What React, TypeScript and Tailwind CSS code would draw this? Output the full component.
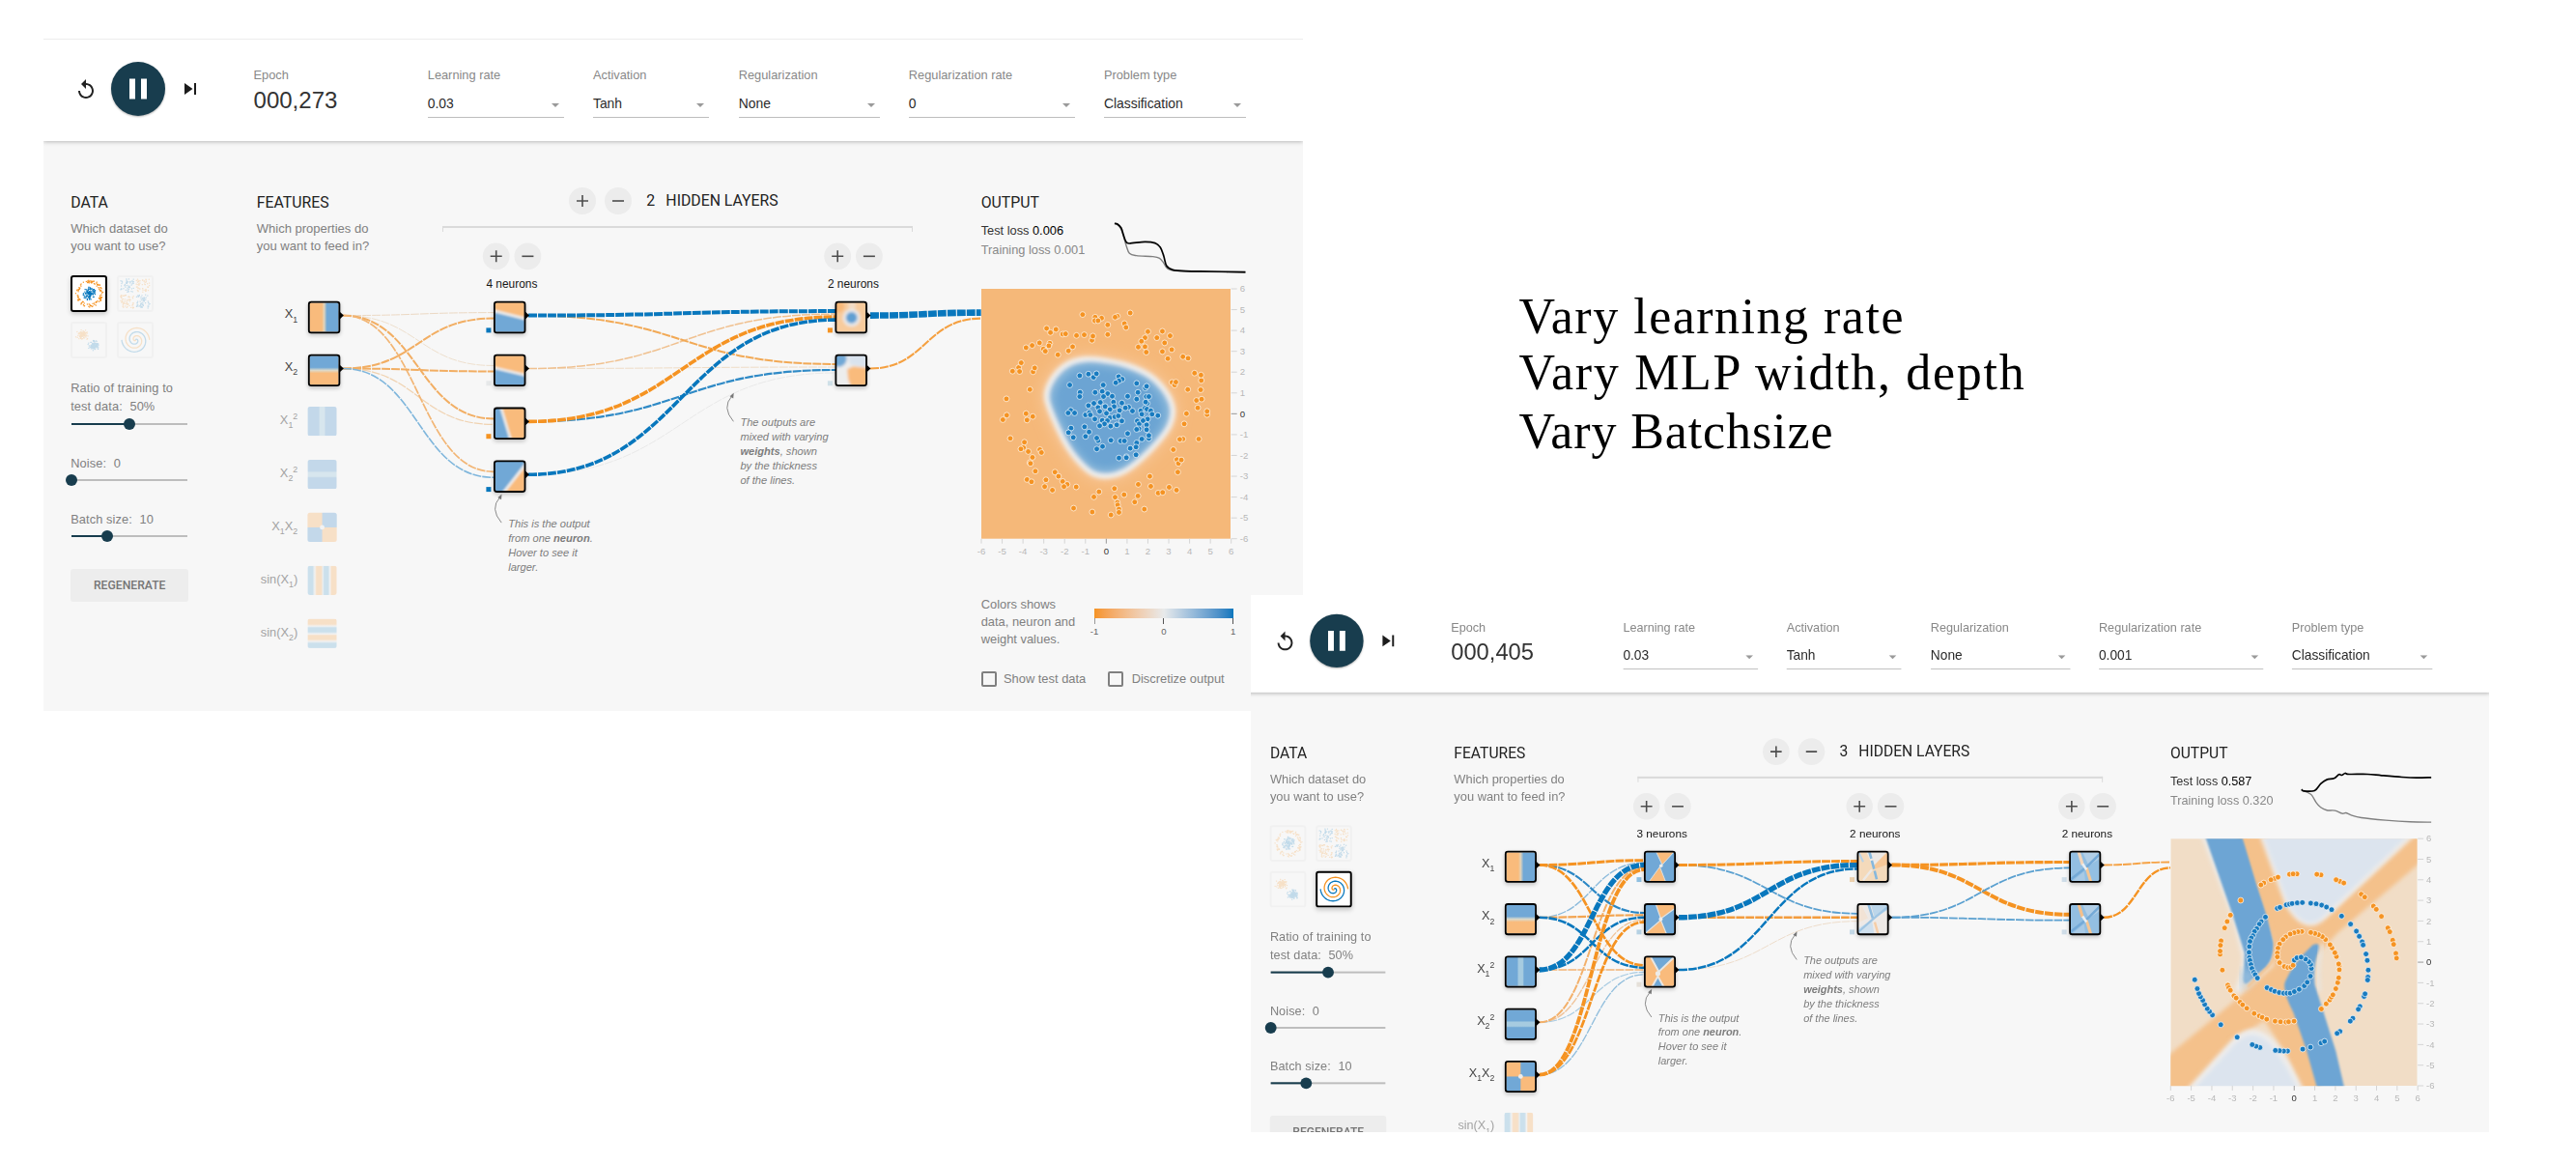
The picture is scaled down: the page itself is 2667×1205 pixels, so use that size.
import React from "react";

type Pt = [number, number];

const ORANGE = "#f59322";
const BLUE = "#0877bd";
const O = "#f9bb7c";
const B = "#71a8d6";
const W = "#ececea";

/* ---------- helpers ---------- */

function rng(seed: number) {
  let a = seed;
  return () => {
    a = (a + 0x6d2b79f5) | 0;
    let t = Math.imul(a ^ (a >>> 15), 1 | a);
    t = (t + Math.imul(t ^ (t >>> 7), 61 | t)) ^ t;
    return ((t ^ (t >>> 14)) >>> 0) / 4294967296;
  };
}

function pairs(s: string): Pt[] {
  return s
    .trim()
    .split(/\s+/)
    .map((p) => p.split(",").map(Number) as Pt);
}

function smooth(pts: Pt[], closed: boolean) {
  const n = pts.length;
  const at = (i: number) => (closed ? pts[(i + n) % n] : pts[Math.max(0, Math.min(n - 1, i))]);
  let d = `M${pts[0][0]},${pts[0][1]}`;
  for (let i = 0; i < (closed ? n : n - 1); i++) {
    const [a, b, c, e] = [at(i - 1), at(i), at(i + 1), at(i + 2)];
    d += `C${b[0] + (c[0] - a[0]) / 6},${b[1] + (c[1] - a[1]) / 6} ${c[0] - (e[0] - b[0]) / 6},${c[1] - (e[1] - b[1]) / 6} ${c[0]},${c[1]}`;
  }
  return d;
}

/* ---------- dataset thumbnails ---------- */

type Kind = "circle" | "xor" | "gauss" | "spiral";

function thumbDots(kind: Kind) {
  const r = rng(kind.length * 977 + 13);
  const g = () => r() + r() + r() + r() - 2;
  const out: { x: number; y: number; c: string }[] = [];
  if (kind === "circle") {
    for (let i = 0; i < 120; i++) {
      const a = r() * Math.PI * 2;
      const m = r() * 7;
      out.push({ x: 19.6 + m * Math.cos(a), y: 18.9 + m * Math.sin(a), c: BLUE });
    }
    for (let i = 0; i < 120; i++) {
      const a = r() * Math.PI * 2;
      const m = 10.8 + r() * 3.4;
      out.push({ x: 19.6 + m * Math.cos(a), y: 18.9 + m * Math.sin(a), c: ORANGE });
    }
  } else if (kind === "xor") {
    for (let i = 0; i < 230; i++) {
      const x = (r() < 0.5 ? -1 : 1) * (1.2 + r() * 14);
      const y = (r() < 0.5 ? -1 : 1) * (1.2 + r() * 14);
      out.push({ x: 18.9 + x, y: 18.9 + y, c: x * y > 0 ? BLUE : ORANGE });
    }
  } else if (kind === "gauss") {
    for (let i = 0; i < 110; i++) {
      out.push({ x: 12.8 + g() * 4, y: 14 + g() * 3.8, c: ORANGE });
      out.push({ x: 24.6 + g() * 4, y: 25 + g() * 3.8, c: BLUE });
    }
  }
  return out;
}

function spiralPath(delta: number) {
  const p: string[] = [];
  for (let i = 0; i <= 90; i++) {
    const m = (i / 90) * 14.4;
    const t = 1.75 * (i / 90) * 2 * Math.PI + delta;
    p.push(`${(19.4 + m * Math.sin(t)).toFixed(2)},${(18.9 - m * Math.cos(t)).toFixed(2)}`);
  }
  return p.join(" ");
}

function Thumb({ kind, active }: { kind: Kind; active: boolean }) {
  return (
    <div
      className={
        active
          ? "h-[37.5px] w-[37.5px] overflow-hidden rounded-[3px] bg-white shadow-[0_2px_5px_rgba(0,0,0,0.2)] outline-2 -outline-offset-2 outline-black"
          : "h-[37.5px] w-[37.5px] overflow-hidden rounded-[3px] outline-2 -outline-offset-2 outline-[#f1f1f1]"
      }
    >
      <svg width="37.5" height="37.5" viewBox="0 0 37.5 37.5" opacity={active ? 1 : 0.22}>
        {kind === "spiral" ? (
          <>
            <polyline points={spiralPath(0)} fill="none" stroke={BLUE} strokeWidth="1.3" />
            <polyline points={spiralPath(Math.PI)} fill="none" stroke={ORANGE} strokeWidth="1.3" />
          </>
        ) : (
          thumbDots(kind).map((d, i) => <rect key={i} x={d.x - 0.6} y={d.y - 0.6} width="1.2" height="1.2" fill={d.c} />)
        )}
      </svg>
    </div>
  );
}

/* ---------- header ---------- */

function Select({ label, value, box }: { label: string; value: string; box: string }) {
  return (
    <div className={box}>
      <div className="h-4 text-[12.8px] leading-4 text-[#888]">{label}</div>
      <div className="mt-[11.4px] flex h-[24.6px] justify-between border-b border-[#bdbdbd] pr-[5px] text-[13.9px] leading-5 text-[#2b2b2b]">
        <span>{value}</span>
        <svg className="mt-[10px]" width="8" height="4" viewBox="0 0 8 4">
          <path d="M0 0h8L4 4z" fill="#9a9a9a" />
        </svg>
      </div>
    </div>
  );
}

function Header({ epoch, regRate }: { epoch: string; regRate: string }) {
  return (
    <header className="relative z-10 flex h-[106px] border-t border-[#ececec] bg-white pl-[31.8px] shadow-[0_1px_4px_rgba(0,0,0,0.25)]">
      <svg className="mt-[40.4px]" width="24" height="24" viewBox="0 0 24 24" fill="#222">
        <path d="M12 5V1L7 6l5 5V7c3.31 0 6 2.69 6 6s-2.69 6-6 6-6-2.69-6-6H4c0 4.42 3.58 8 8 8s8-3.58 8-8-3.58-8-8-8z" />
      </svg>
      <div className="mt-[23px] ml-[14.2px] flex h-14 w-14 items-center justify-center rounded-full bg-[#183d4e] shadow-[0_1px_2px_rgba(0,0,0,0.3)]">
        <svg width="36" height="36" viewBox="0 0 24 24" fill="#fff">
          <path d="M6 19h4V5H6v14zm8-14v14h4V5h-4z" />
        </svg>
      </div>
      <svg className="mt-[39.2px] ml-[14px]" width="24" height="24" viewBox="0 0 24 24" fill="#1c1c1c">
        <path d="M6 18l8.5-6L6 6v12zM16 6v12h2V6h-2z" />
      </svg>
      <div className="ml-[53.6px] w-[180.2px] pt-[28.8px]">
        <div className="h-4 text-[12.8px] leading-4 text-[#888]">Epoch</div>
        <div className="mt-1 text-[24px] leading-7 text-[#333]">{epoch}</div>
      </div>
      <Select box="w-[141px] mr-[30.2px] pt-[28.8px]" label="Learning rate" value="0.03" />
      <Select box="w-[120.4px] mr-[30.4px] pt-[28.8px]" label="Activation" value="Tanh" />
      <Select box="w-[146.2px] mr-[29.9px] pt-[28.8px]" label="Regularization" value="None" />
      <Select box="w-[172.6px] mr-[29.5px] pt-[28.8px]" label="Regularization rate" value={regRate} />
      <Select box="w-[146.6px] pt-[28.8px]" label="Problem type" value="Classification" />
    </header>
  );
}

/* ---------- data column ---------- */

function Slider({ at, cls }: { at: number; cls: string }) {
  return (
    <div className={`relative ml-[0.8px] flex h-3 w-[120px] items-center ${cls}`}>
      <div className="h-[2.4px] w-full bg-[#bdbdbd]">
        <div className="h-full bg-[#183d4e]" style={{ width: `${at * 100}%` }} />
      </div>
      <div className="absolute top-0 -ml-1.5 h-3 w-3 rounded-full bg-[#183d4e]" style={{ left: `${at * 100}%` }} />
    </div>
  );
}

function Heading({ children }: { children: React.ReactNode }) {
  return <h4 className="h-5 font-[Roboto] text-[15.8px] leading-5 text-[#222]">{children}</h4>;
}

function DataColumn({ selected }: { selected: Kind }) {
  const kinds: Kind[] = ["circle", "xor", "gauss", "spiral"];
  const label = "text-[12.8px] leading-[19.7px] tracking-[0.1px] text-[#808080]";
  return (
    <div className="ml-[28.2px] w-[192.6px] pt-[53.9px]">
      <Heading>DATA</Heading>
      <p className="mt-[8.6px] text-[13px] leading-[18px] text-[#808080]">
        Which dataset do
        <br />
        you want to use?
      </p>
      <div className="mt-[20.8px] grid w-[85.5px] grid-cols-2 gap-[10.5px]">
        {kinds.map((k) => (
          <Thumb key={k} kind={k} active={k === selected} />
        ))}
      </div>
      <div className={`mt-[20.9px] ${label}`}>
        Ratio of training to
        <br />
        test data:<span className="ml-[7.6px]">50%</span>
      </div>
      <Slider at={0.5} cls="mt-[2.2px]" />
      <div className={`mt-[24.4px] ${label}`}>
        Noise:<span className="ml-[7.6px]">0</span>
      </div>
      <Slider at={0} cls="mt-[1.9px]" />
      <div className={`mt-[24.4px] ${label}`}>
        Batch size:<span className="ml-[7.6px]">10</span>
      </div>
      <Slider at={0.308} cls="mt-[1.9px]" />
      <button className="mt-[27.7px] block h-[34px] w-[122px] rounded-[3px] bg-[#ededed] font-[Roboto] text-[12.2px] font-medium text-[#757575]">
        REGENERATE
      </button>
    </div>
  );
}

/* ---------- node heatmaps, each in a 30 x 30 box ---------- */

function Heat({ kind }: { kind: string }) {
  const poly = (points: string, fill: string) => <polygon points={points} fill={fill} />;
  const bg = (fill: string) => <rect x="-5" y="-5" width="40" height="40" fill={fill} />;
  switch (kind) {
    case "x1":
      return <rect width="30" height="30" fill="url(#gx1)" />;
    case "x2":
      return <rect width="30" height="30" fill="url(#gx2)" />;
    case "x1sq":
      return <rect width="30" height="30" fill="url(#gx1sq)" />;
    case "x2sq":
      return <rect width="30" height="30" fill="url(#gx2sq)" />;
    case "sin1":
      return <rect width="30" height="30" fill="url(#gs1)" />;
    case "sin2":
      return <rect width="30" height="30" fill="url(#gs2)" />;
    case "x1x2":
      return (
        <g filter="url(#b05)">
          {bg(B)}
          <rect x="-5" y="-5" width="20" height="20" fill={O} />
          <rect x="15" y="15" width="20" height="20" fill={O} />
          <circle cx="15" cy="15" r="2.4" fill={W} />
        </g>
      );
    case "a1":
      return (
        <g filter="url(#b1)">
          {bg(O)}
          {poly("-5,7.5 35,17.5 35,40 -5,40", B)}
          <path d="M-5 7.5L35 17.5" stroke={W} strokeWidth="3" />
        </g>
      );
    case "a2":
      return (
        <g filter="url(#b1)">
          {bg(O)}
          {poly("-5,11.5 35,21 35,40 -5,40", B)}
          <path d="M-5 11.5L35 21" stroke={W} strokeWidth="2.6" />
        </g>
      );
    case "a3":
      return (
        <g filter="url(#b1)">
          {bg(O)}
          {poly("-5,-5 5,-5 17,35 -5,35", B)}
          <path d="M5 -5L17 35" stroke={W} strokeWidth="2.6" />
        </g>
      );
    case "a4":
      return (
        <g filter="url(#b1)">
          {bg(B)}
          {poly("35,-2 35,35 6,35", O)}
          <path d="M35 -2L6 35" stroke={W} strokeWidth="2.8" />
        </g>
      );
    case "a5":
      return (
        <g filter="url(#b2)">
          {bg("#f7cb9d")}
          <circle cx="2" cy="4" r="6" fill="#f8b878" />
          <circle cx="16" cy="3" r="4" fill="#f3dcc5" />
          <circle cx="15.5" cy="15.5" r="9" fill="#e8e9ea" />
          <circle cx="15.5" cy="15.5" r="5.8" fill="#5f9fd2" />
        </g>
      );
    case "a6":
      return (
        <g filter="url(#b15)">
          {bg("#ededed")}
          {poly("10,-5 35,-5 35,13 14,9", "#d9e3ee")}
          <circle cx="2" cy="3" r="8.5" fill={B} />
          {poly("11,14 17,11 35,13 35,35 16,35 12,24", O)}
        </g>
      );
    case "b1":
      return (
        <g filter="url(#b05)">
          {bg(B)}
          <g stroke="#d5e0e6" strokeWidth="1">
            {poly("10,-3 32,-3 17.5,13", O)}
            {poly("2,33 22,33 15,15", O)}
          </g>
          <circle cx="16.3" cy="14" r="1.8" fill={W} />
        </g>
      );
    case "b2":
      return (
        <g filter="url(#b05)">
          {bg(B)}
          <g stroke="#dfe3e4" strokeWidth="1.2">
            {poly("10,-3 35,-3 33,2 16,14.5", O)}
            {poly("-4,33 23,33 16,16", O)}
          </g>
          <circle cx="16" cy="15" r="2" fill={W} />
        </g>
      );
    case "b3":
      return (
        <g filter="url(#b05)">
          {bg(O)}
          <g stroke="#e9e6e2" strokeWidth="2">
            {poly("4,-3 33,-3 14,15", B)}
            {poly("5,34 21,34 13,20", B)}
          </g>
          <circle cx="13" cy="17" r="2.6" fill={W} />
        </g>
      );
    case "b4":
      return (
        <g filter="url(#b05)">
          {bg("#f4dabb")}
          {poly("7,-3 32,-3 15,15", "#ece9e6")}
          {poly("33,-3 35,11 18,17 16,14", "#f7c898")}
          <path d="M0 -1L5 10" stroke="#b7d3e8" strokeWidth="2" />
          <path d="M11 -2L16.5 18L20 32" stroke="#86b8dd" strokeWidth="2.6" fill="none" strokeDasharray="9 2" />
          <path d="M14 18L5 29" stroke="#ece9e6" strokeWidth="2.4" />
        </g>
      );
    case "b5":
      return (
        <g filter="url(#b05)">
          {bg("#ede9e6")}
          {poly("12,-3 34,-3 34,3 17,14", "#bcd6ea")}
          {poly("-3,34 -3,26 14,16 17,34", "#cfe0ee")}
          <path d="M10 -2L15 14" stroke="#8fbce0" strokeWidth="2.6" />
          <path d="M32 1L15 15L-1 29" stroke="#9fc5e3" strokeWidth="2.2" fill="none" />
          <path d="M17 18L21 32" stroke="#f6cda6" strokeWidth="2.4" />
          {poly("-3,2 4,2 10,14 -3,20", "#f2e3d5")}
        </g>
      );
    case "b6":
    default:
      return (
        <g filter="url(#b05)">
          {bg("#93bfe2")}
          {poly("11,-3 34,-3 34,4 19,14", "#b2cfe7")}
          {poly("-3,34 14,20 16,34", "#a9cae5")}
          <path d="M32 0L17 15L-1 29" stroke="#74aad7" strokeWidth="2.6" fill="none" />
          <path d="M8 -2L12.5 13" stroke={kind === "b6" ? "#f3d6bb" : "#f4c08b"} strokeWidth="3.2" />
          <path d="M16.5 16L21.5 32" stroke="#f5c795" strokeWidth="3" />
          <path d="M12.5 12L16.5 18" stroke="#e9eef2" strokeWidth="2.6" />
        </g>
      );
  }
}

const stops = (list: [number, string][]) => list.map(([o, c], i) => <stop key={i} offset={o} stopColor={c} />);
const PALE = "#a6cbe0";
const SB = "#86bbdc";

function Defs() {
  const v = { x1: 0, y1: 0, x2: 0, y2: 1 };
  return (
    <defs>
      <linearGradient id="gx1">{stops([[0, O], [0.42, O], [0.5, "#e2d3b9"], [0.6, B], [1, B]])}</linearGradient>
      <linearGradient id="gx2" {...v}>{stops([[0, B], [0.4, B], [0.5, "#dcdacb"], [0.6, O], [1, O]])}</linearGradient>
      <linearGradient id="gx1sq">{stops([[0, B], [0.38, B], [0.43, PALE], [0.57, PALE], [0.62, B], [1, B]])}</linearGradient>
      <linearGradient id="gx2sq" {...v}>{stops([[0, B], [0.38, B], [0.44, PALE], [0.57, PALE], [0.62, B], [1, B]])}</linearGradient>
      <linearGradient id="gs1">{stops([[0, SB], [0.17, SB], [0.25, W], [0.31, O], [0.46, O], [0.53, "#cfe0e8"], [0.57, SB], [0.7, SB], [0.77, W], [0.82, O], [1, O]])}</linearGradient>
      <linearGradient id="gs2" {...v}>{stops([[0, O], [0.18, O], [0.25, W], [0.31, SB], [0.44, SB], [0.52, W], [0.57, O], [0.7, O], [0.77, W], [0.84, SB], [1, SB]])}</linearGradient>
      <filter id="b05"><feGaussianBlur stdDeviation="0.5" /></filter>
      <filter id="b1"><feGaussianBlur stdDeviation="0.9" /></filter>
      <filter id="b15"><feGaussianBlur stdDeviation="1.5" /></filter>
      <filter id="b2"><feGaussianBlur stdDeviation="1.6" /></filter>
      <filter id="nodeShadow" x="-30%" y="-30%" width="160%" height="170%">
        <feGaussianBlur stdDeviation="2" />
      </filter>
      <clipPath id="cell"><rect width="30.3" height="30.3" rx="1.6" /></clipPath>
      <clipPath id="cellSoft"><rect width="30.3" height="30.3" rx="2.5" /></clipPath>
    </defs>
  );
}

/* ---------- network diagram ---------- */

const ROW = 54.9;
const cy = (r: number) => 326.6 + ROW * r;

function Node({ x, row, kind }: { x: number; row: number; kind: string }) {
  const top = 311.8 + ROW * row;
  return (
    <g>
      <rect x={x} y={top + 2} width="33.3" height="33.3" rx="3" fill="#000" opacity="0.22" filter="url(#nodeShadow)" />
      <path d={`M${x + 32} ${cy(row) - 4.6}L${x + 37} ${cy(row)}L${x + 32} ${cy(row) + 4.6}z`} fill="#000" />
      <g transform={`translate(${x + 1.5} ${top + 1.5})`}>
        <g clipPath="url(#cell)">
          <g transform="scale(1.01)">
            <Heat kind={kind} />
          </g>
        </g>
      </g>
      <rect x={x + 0.9} y={top + 0.9} width="31.6" height="31.6" rx="2.4" fill="none" stroke="#000" strokeWidth="1.8" />
    </g>
  );
}

// from x, from row, to x, to row, index among inputs, input count, width, colour
type Link = [number, number, number, number, number, number, number, string];

function LinkPath({ l }: { l: Link }) {
  const [x0, r0, x1, r1, i, n, w, c] = l;
  const y0 = cy(r0);
  const y1 = cy(r1) + (12 * (i - (n - 1) / 2)) / n;
  const m = (x0 + x1) / 2;
  return <path d={`M${x0},${y0}C${m},${y0} ${m},${y1} ${x1},${y1}`} fill="none" stroke={c} strokeWidth={w} strokeDasharray="8.9 1.1" />;
}

function RoundButton({ x, y, minus }: { x: number; y: number; minus?: boolean }) {
  return (
    <g>
      <circle cx={x} cy={y} r="13.9" fill="#ececec" />
      <path d={minus ? `M${x - 6} ${y}h12` : `M${x - 6} ${y}h12M${x} ${y - 6}v12`} stroke="#4d4d4d" strokeWidth="1.6" fill="none" />
    </g>
  );
}

function Callout({ x, y, lines }: { x: number; y: number; lines: React.ReactNode[] }) {
  return (
    <g>
      <path d={`M${x} ${y + 29.5}Q${x - 12.5} ${y + 15} ${x - 1.5} ${y + 3}`} fill="none" stroke="#8a8a8a" strokeWidth="1" />
      <path d={`M${x + 0.3} ${y}L${x - 3.8} ${y + 3.4}L${x - 0.2} ${y + 5.6}z`} fill="#777" />
      {lines.map((t, i) => (
        <text key={i} x={x + 7} y={y + 34.1 + i * 15.05} fontSize="11.1" fontStyle="italic" fill="#7d7d7d">
          {t}
        </text>
      ))}
    </g>
  );
}

interface Net {
  active: number;
  columns: { x: number; nodes: string[]; bias: string[] }[];
  links: Link[];
  hint: Pt;
  weightHint: Pt;
}

const FEATURES: { kind: string; label: [string, "sub" | "sup" | ""][] }[] = [
  { kind: "x1", label: [["X", ""], ["1", "sub"]] },
  { kind: "x2", label: [["X", ""], ["2", "sub"]] },
  { kind: "x1sq", label: [["X", ""], ["1", "sub"], ["2", "sup"]] },
  { kind: "x2sq", label: [["X", ""], ["2", "sub"], ["2", "sup"]] },
  { kind: "x1x2", label: [["X", ""], ["1", "sub"], ["X", ""], ["2", "sub"]] },
  { kind: "sin1", label: [["sin(X", ""], ["1", "sub"], [")", ""]] },
  { kind: "sin2", label: [["sin(X", ""], ["2", "sub"], [")", ""]] },
];

function FeatureLabel({ row, parts, active }: { row: number; parts: [string, string][]; active: boolean }) {
  let prev = 0;
  return (
    <text x="308.2" y={329.2 + ROW * row} textAnchor="end" fontSize="12.8" fill={active ? "#444" : "#a3a3a3"}>
      {parts.map(([t, k], i) => {
        const off = k === "sub" ? 4.3 : k === "sup" ? -5 : 0;
        const dy = off - prev;
        prev = off;
        return (
          <tspan key={i} dy={dy} fontSize={k ? 8.8 : 12.8}>
            {t}
          </tspan>
        );
      })}
    </text>
  );
}

function Network({ net }: { net: Net }) {
  return (
    <svg className="pointer-events-none absolute top-0 left-0 font-['Liberation_Sans',Arial,sans-serif]" width="1304" height="590" viewBox="45 146 1304 590">
      <Defs />
      {net.links.map((l, i) => (
        <LinkPath key={i} l={l} />
      ))}
      {FEATURES.map((f, r) => (
        <g key={r}>
          <FeatureLabel row={r} parts={f.label} active={r < net.active} />
          {r < net.active ? (
            <Node x={318.9} row={r} kind={f.kind} />
          ) : (
            <g transform={`translate(318.4 ${311.2 + ROW * r})`} opacity="0.38">
              <g clipPath="url(#cellSoft)">
                <g transform="scale(1.01)">
                  <Heat kind={f.kind} />
                </g>
              </g>
            </g>
          )}
        </g>
      ))}
      {net.columns.map((c, i) => (
        <g key={i}>
          <RoundButton x={c.x + 2.7} y={265.3} />
          <RoundButton x={c.x + 35.4} y={265.3} minus />
          <text x={c.x + 18.9} y="297.8" textAnchor="middle" fontSize="11.9" fill="#161616">
            {c.nodes.length} neurons
          </text>
          {c.nodes.map((k, r) => (
            <g key={r}>
              <rect x={c.x - 7.6} y={339.4 + ROW * r} width="5" height="5" fill={c.bias[r]} />
              <Node x={c.x} row={r} kind={k} />
            </g>
          ))}
        </g>
      ))}
      <Callout
        x={net.hint[0]}
        y={net.hint[1]}
        lines={[
          "This is the output",
          <>
            from one <tspan fontWeight="bold">neuron</tspan>.
          </>,
          "Hover to see it",
          "larger.",
        ]}
      />
      <Callout
        x={net.weightHint[0]}
        y={net.weightHint[1]}
        lines={[
          "The outputs are",
          "mixed with varying",
          <>
            <tspan fontWeight="bold">weights</tspan>, shown
          </>,
          "by the thickness",
          "of the lines.",
        ]}
      />
    </svg>
  );
}

/* ---------- output column ---------- */

function Axes() {
  const u = 258.7 / 12;
  const vals = Array.from({ length: 13 }, (_, i) => i - 6);
  return (
    <g fontSize="9.6">
      {vals.map((v) => {
        const p = (v + 6) * u;
        const q = (6 - v) * u;
        return (
          <g key={v} fill={v === 0 ? "#333" : "#b8b8b8"}>
            <path d={`M${p} 258.7v5`} stroke={v === 0 ? "#999" : "#d5d5d5"} />
            <path d={`M258.7 ${q}h6`} stroke={v === 0 ? "#999" : "#d5d5d5"} />
            <text x={p} y="274.6" textAnchor="middle">{v}</text>
            <text x="267.7" y={q + 3.2}>{v}</text>
          </g>
        );
      })}
    </g>
  );
}

function Dots({ pts, color }: { pts: Pt[]; color: string }) {
  return (
    <g fill={color} stroke="#fff" strokeWidth="2.4" strokeOpacity="0.85">
      {pts.map(([x, y], i) => (
        <circle key={i} cx={x} cy={y} r="8.8" />
      ))}
    </g>
  );
}

const RING = pairs(`362,107 401,115 421,118 400,126 410,126 470,112 463,115 510,102 492,135 497,147 440,139 440,169 250,150 262,163 279,153 300,168 309,167 343,172 367,170 391,187 394,174 228,195 205,203 186,210 240,214 260,196 257,204 246,221 285,232 318,220 331,207 565,160 556,179 545,190 535,208 556,207 560,224 593,179 610,159 634,173 617,195 610,222 639,216 627,244 674,238 690,243 144,283 163,272 171,257 166,284 208,285 213,273 198,340 125,369 126,420 114,434 186,415 189,435 207,424 137,492 181,504 178,521 170,525 193,533 206,551 229,527 234,536 198,567 200,570 215,594 189,620 203,627 244,642 248,621 276,597 287,610 268,653 300,626 314,635 304,642 342,643 334,709 392,721 397,674 413,658 461,648 463,675 470,691 471,699 475,712 475,722 450,730 491,667 535,635 524,690 534,671 554,712 571,610 574,641 597,662 611,660 631,644 654,653 658,597 655,558 660,570 669,559 644,527 674,494 664,495 723,494 678,447 685,415 749,418 749,408 720,397 716,374 732,370 729,341 689,340 731,312 730,295 710,289 640,318 648,326 652,317`);
const CORE = pairs(`353,297 380,292 396,302 405,291 322,326 354,349 353,362 401,349 426,326 423,346 474,300 485,308 475,313 465,319 440,353 427,362 454,361 458,379 417,380 397,383 380,390 410,396 432,393 484,382 502,361 530,321 534,349 530,370 557,335 561,330 560,362 568,362 563,383 558,379 460,393 447,402 477,405 505,395 495,397 517,407 415,408 436,414 325,405 317,413 337,413 371,419 383,412 386,419 400,432 423,436 447,428 439,437 462,425 473,422 484,438 468,450 430,447 449,454 415,453 543,406 546,417 556,398 562,401 574,406 578,417 596,421 532,438 538,447 564,432 550,437 561,450 537,462 530,464 561,465 326,460 318,474 333,489 368,456 371,486 382,472 410,499 406,491 450,498 424,517 406,525 502,477 480,500 492,500 510,523 530,506 546,494 568,492 568,483 528,519 528,543 498,549 498,552 475,553`);
const SPIRAL_O = pairs(`368,222 359,228 402,208 390,212 412,204 448,195 471,194 459,194 546,197 533,195 605,217 593,212 617,222 671,257 682,266 709,294 718,304 734,326 754,362 760,374 769,400 772,413 779,441 781,456 296,276 264,322 254,342 246,362 235,402 233,416 232,444 232,434 239,493 256,540 259,548 264,556 275,573 282,580 294,593 302,601 315,612 338,628 354,636 363,640 377,646 403,652 420,654 437,655 445,654 462,652 547,614 562,598 573,586 578,577 583,570 592,551 598,532 601,517 603,480 603,492 601,474 594,451 589,439 580,424 574,414 560,398 550,389 538,383 527,379 514,376 486,373 474,374 462,377 450,381 436,390 428,398 417,412 412,425 410,440 410,452 417,470 432,482 443,485 452,484 459,478`);
const SPIRAL_B = pairs(`373,328 360,342 354,350 346,364 339,373 334,386 329,393 325,404 323,420 322,438 323,454 325,463 328,476 331,488 337,500 341,507 348,518 378,548 391,554 402,559 416,563 430,565 440,565 450,565 463,560 478,553 494,542 503,531 513,512 516,488 514,475 508,467 498,459 463,462 471,455 484,453 410,301 418,298 438,290 448,288 456,286 472,284 488,283 514,285 531,287 548,291 563,297 579,305 610,325 638,350 656,372 665,388 674,405 677,415 686,443 690,463 693,493 692,515 691,524 680,575 683,567 667,606 662,615 645,643 637,652 605,684 596,690 546,720 557,715 513,733 489,739 442,745 430,745 417,744 404,743 356,734 344,730 332,725 285,702 234,663 208,633 199,622 192,613 184,600 178,587 171,576 166,566 161,551 153,523`);

const BLOB = smooth(pairs("370,246 430,250 500,265 570,297 620,347 642,400 633,450 598,500 543,556 490,595 440,609 392,600 347,560 310,508 270,425 251,370 256,331 282,289 322,258"), true);

function CirclePlot() {
  return (
    <svg width="258.7" height="258.7" viewBox="47 27 777 777">
      <defs>
        <filter id="p30" x="-50%" y="-50%" width="200%" height="200%"><feGaussianBlur stdDeviation="22" /></filter>
        <filter id="p7"><feGaussianBlur stdDeviation="6.5" /></filter>
        <filter id="p12"><feGaussianBlur stdDeviation="12" /></filter>
      </defs>
      <rect x="47" y="27" width="777" height="777" fill="#f5b879" />
      <path d={BLOB} fill="#f7caa0" stroke="#f7caa0" strokeWidth="26" filter="url(#p30)" />
      <path d={BLOB} fill="#8ab8da" stroke="#efefee" strokeWidth="17" filter="url(#p7)" />
      <path d={BLOB} fill="#6ca4d3" transform="translate(440 425) scale(0.87) translate(-440 -425)" filter="url(#p12)" />
      <Dots pts={RING} color={ORANGE} />
      <Dots pts={CORE} color="#187bc0" />
    </svg>
  );
}

function SpiralPlot() {
  const tan = "#f1ddc6";
  const band = "#f4c18b";
  const blue = "#6da5d4";
  const ice = "#dce4ee";
  return (
    <svg width="258.7" height="258.7" viewBox="78 84 769 769">
      <defs>
        <filter id="q3"><feGaussianBlur stdDeviation="2.5" /></filter>
        <filter id="q8"><feGaussianBlur stdDeviation="6" /></filter>
        <filter id="q14"><feGaussianBlur stdDeviation="13" /></filter>
      </defs>
      <rect x="78" y="84" width="769" height="769" fill={tan} />
      <polygon points="270,40 360,40 480,330 560,330 900,20 900,120 600,375 500,480 460,560 560,900 490,900 440,760 370,650 290,700 110,900 20,900 20,800 300,570 400,480 398,400" fill={band} filter="url(#q8)" />
      <path d="M355,60L440,290Q490,375 545,340L850,50z" fill={ice} stroke="#eeedec" strokeWidth="10" filter="url(#q8)" />
      <path d="M115,890L270,720Q335,650 400,725Q450,790 495,890z" fill={ice} stroke="#eeedec" strokeWidth="16" filter="url(#q8)" />
      <path d="M150,0L187,84L280,330L310,450Q308,510 285,560" fill="none" stroke="#edebe8" strokeWidth="20" filter="url(#q8)" />
      <path d="M176,50L292,50L345,222L380,330L399,410Q400,455 375,485L318,532Q300,545 306,500L308,440L272,325z" fill={blue} filter="url(#q3)" />
      <path d="M296,490L350,500L300,560z" fill="#a9c9e2" opacity="0.7" filter="url(#q14)" />
      <path d="M300,50L312,84L350,222L384,325L402,400Q406,460 384,480L318,545" fill="none" stroke={band} strokeWidth="7" filter="url(#q3)" />
      <path d="M520,415Q545,405 540,430Q520,480 527,540L562,650L592,745L628,900L545,900L500,740L460,625Q425,560 434,530Q460,470 520,415z" fill={blue} filter="url(#q3)" />
      <path d="M552,410Q530,470 540,560" fill="none" stroke="#e8e6e2" strokeWidth="14" opacity="0.8" filter="url(#q8)" />
      <Dots pts={SPIRAL_O} color={ORANGE} />
      <Dots pts={SPIRAL_B} color="#187bc0" />
    </svg>
  );
}

interface Loss {
  test: string;
  training: string;
  testPath: string;
  trainingPath: string;
  transform: string;
}

function OutputColumn({ loss, plot }: { loss: Loss; plot: "circle" | "spiral" }) {
  return (
    <div className="w-[300px] pt-[53.9px]">
      <Heading>OUTPUT</Heading>
      <div className="mt-[9.2px] flex h-[69.9px] text-[12.8px] leading-[20.3px]">
        <div className="w-[138.8px]">
          <div className="text-[#333]">
            Test loss <span className="text-black">{loss.test}</span>
          </div>
          <div className="text-[#888]">Training loss {loss.training}</div>
        </div>
        <svg className="mt-[0.9px] overflow-visible" width="136" height="54" viewBox="1154.5 230 136 54">
          <g transform={loss.transform} fill="none" strokeLinejoin="round">
            <path d={smooth(pairs(loss.trainingPath), false)} stroke="#808080" strokeWidth="1.4" vectorEffect="non-scaling-stroke" />
            <path d={smooth(pairs(loss.testPath), false)} stroke="#000" strokeWidth="1.7" vectorEffect="non-scaling-stroke" />
          </g>
        </svg>
      </div>
      <div className="relative h-[258.7px] w-[258.7px]">
        {plot === "circle" ? <CirclePlot /> : <SpiralPlot />}
        <svg className="absolute top-0 left-0 overflow-visible" width="258.7" height="258.7">
          <Axes />
        </svg>
      </div>
      <div className="mt-[59.8px] flex">
        <p className="w-[117.3px] text-[12.9px] leading-[18px] whitespace-nowrap text-[#808080]">
          Colors shows
          <br />
          data, neuron and
          <br />
          weight values.
        </p>
        <div className="mt-[12.5px] w-[143.7px]">
          <div className="h-[9.8px] bg-linear-to-r from-[#f59322] via-[#e8eaeb] to-[#0877bd]" />
          <div className="flex h-[6.2px] justify-between">
            <div className="w-px bg-[#999]" />
            <div className="w-px bg-[#555]" />
            <div className="w-px bg-[#555]" />
          </div>
          <div className="-mx-2.5 mt-[2.4px] flex justify-between text-[9.6px] leading-[12px] text-[#666]">
            <span className="w-5 text-center">-1</span>
            <span className="w-5 text-center">0</span>
            <span className="w-5 text-center">1</span>
          </div>
        </div>
      </div>
      <div className="mt-[23.5px] flex h-4 items-center text-[12.9px] leading-4 whitespace-nowrap text-[#808080]">
        <div className="h-4 w-4 rounded-[2px] border-2 border-[#808080]" />
        <span className="ml-[7.3px] w-[108.2px]">Show test data</span>
        <div className="h-4 w-4 rounded-[2px] border-2 border-[#808080]" />
        <span className="ml-[8.5px]">Discretize output</span>
      </div>
    </div>
  );
}

/* ---------- playground ---------- */

function HeadButton({ minus }: { minus?: boolean }) {
  return (
    <div className="flex h-7 w-7 items-center justify-center rounded-full bg-[#ececec]">
      <svg width="12" height="12" viewBox="0 0 12 12">
        <path d={minus ? "M0 6h12" : "M0 6h12M6 0v12"} stroke="#4d4d4d" strokeWidth="1.6" />
      </svg>
    </div>
  );
}

interface Props {
  epoch: string;
  regRate: string;
  dataset: Kind;
  net: Net;
  loss: Loss;
  plot: "circle" | "spiral";
}

function Playground({ epoch, regRate, dataset, net, loss, plot }: Props) {
  return (
    <section className="h-[696px] w-full bg-[#f7f7f7] font-['Liberation_Sans',Arial,sans-serif]">
      <Header epoch={epoch} regRate={regRate} />
      <div className="relative flex h-[590px]">
        <DataColumn selected={dataset} />
        <div className="w-[192.7px] pt-[53.9px]">
          <Heading>FEATURES</Heading>
          <p className="mt-[8.6px] text-[13px] leading-[18px] text-[#808080]">
            Which properties do
            <br />
            you want to feed in?
          </p>
        </div>
        <div className="mr-[71px] w-[486.2px] pt-[47.7px]">
          <div className="flex h-7 items-center pl-[130.5px] font-[Roboto] text-[15.8px] whitespace-nowrap text-[#222]">
            <HeadButton />
            <div className="ml-[8.8px]">
              <HeadButton minus />
            </div>
            <span className="ml-[15.6px] w-[20px]">{net.columns.length}</span>
            <span>HIDDEN LAYERS</span>
          </div>
          <div className="mt-3 h-1.5 border-x border-t-2 border-[#dadada]" />
        </div>
        <OutputColumn loss={loss} plot={plot} />
        <Network net={net} />
      </div>
    </section>
  );
}

const F = 355;
const OUT = 1015.7;

const netA: Net = {
  active: 2,
  columns: [
    { x: 511, nodes: ["a1", "a2", "a3", "a4"], bias: [BLUE, "#e6e8e9", ORANGE, BLUE] },
    { x: 864.5, nodes: ["a5", "a6"], bias: [ORANGE, "#cfe0e8"] },
  ],
  links: [
    [F, 0, 511, 0, 0, 2, 1, "#ecd9c4"],
    [F, 0, 511, 1, 0, 2, 0.9, "#ecdcc8"],
    [F, 1, 511, 2, 1, 2, 1.2, "#f0d2b0"],
    [F, 0, 511, 2, 0, 2, 2, "#f2ae63"],
    [F, 0, 511, 3, 0, 2, 1.7, "#f2b574"],
    [F, 1, 511, 0, 1, 2, 2, "#f2ae63"],
    [F, 1, 511, 1, 1, 2, 2, "#f2ae63"],
    [F, 1, 511, 3, 1, 2, 1.6, "#7fb6dc"],
    [547, 1, 865, 1, 1, 4, 1, "#efdcc6"],
    [547, 3, 865, 1, 3, 4, 0.8, "#e4e4e4"],
    [547, 1, 865, 0, 1, 4, 1.5, "#f0c190"],
    [547, 0, 865, 1, 0, 4, 2, "#f2a955"],
    [547, 2, 865, 1, 2, 4, 2.2, "#2f8ac6"],
    [547, 2, 865, 0, 2, 4, 3.6, ORANGE],
    [547, 3, 865, 0, 3, 4, 3.6, BLUE],
    [547, 0, 865, 0, 0, 4, 4, BLUE],
    [901, 0, OUT, 0, 0, 2, 6.6, BLUE],
    [901, 1, OUT, 0, 1, 2, 2.1, "#f5a040"],
  ],
  hint: [519.2, 511.6],
  weightHint: [759.4, 406.8],
};

const netB: Net = {
  active: 5,
  columns: [
    { x: 464.6, nodes: ["b1", "b2", "b3"], bias: ["#8fbfe0", "#b5d1e3", "#e5e0d9"] },
    { x: 687.6, nodes: ["b4", "b5"], bias: ["#ecd0ad", "#c3d8e6"] },
    { x: 909.7, nodes: ["b6", "b7"], bias: ["#cfdde8", "#cfdde8"] },
  ],
  links: [
    [F, 1, 465, 0, 1, 5, 1.4, "#8cbbdc"],
    [F, 3, 465, 1, 3, 5, 1.4, "#f0c49a"],
    [F, 3, 465, 2, 3, 5, 1.2, "#a9cbe2"],
    [F, 4, 465, 2, 4, 5, 1.4, "#93bfdd"],
    [F, 3, 465, 0, 3, 5, 2, "#f3b06a"],
    [F, 2, 465, 2, 2, 5, 1.6, "#f2b475"],
    [F, 0, 465, 1, 0, 5, 2.2, "#2b87c5"],
    [F, 1, 465, 1, 1, 5, 2.2, "#f3a552"],
    [F, 2, 465, 1, 2, 5, 2.6, BLUE],
    [F, 1, 465, 2, 1, 5, 2.6, BLUE],
    [F, 0, 465, 2, 0, 5, 2.7, ORANGE],
    [F, 4, 465, 1, 4, 5, 2.8, ORANGE],
    [F, 4, 465, 0, 4, 5, 3.8, ORANGE],
    [F, 2, 465, 0, 2, 5, 5.4, BLUE],
    [F, 0, 465, 0, 0, 5, 3, ORANGE],
    [501, 2, 688, 1, 2, 3, 0.9, "#ecd9c4"],
    [501, 0, 688, 1, 0, 3, 1.8, "#5aa0d0"],
    [501, 1, 688, 1, 1, 3, 2.6, "#f39c3d"],
    [501, 2, 688, 0, 2, 3, 2.5, BLUE],
    [501, 1, 688, 0, 1, 3, 5.4, BLUE],
    [501, 0, 688, 0, 0, 3, 3, ORANGE],
    [724, 1, 910, 1, 1, 2, 1.8, "#5aa0d0"],
    [724, 0, 910, 1, 0, 2, 4, ORANGE],
    [724, 1, 910, 0, 1, 2, 1.8, "#5aa0d0"],
    [724, 0, 910, 0, 0, 2, 3.2, ORANGE],
    [946, 0, OUT, 0, 0, 2, 1.9, "#f5a245"],
    [946, 1, OUT, 0, 1, 2, 2.4, ORANGE],
  ],
  hint: [472.6, 456.4],
  weightHint: [624.6, 396.2],
};

const lossA: Loss = {
  test: "0.006",
  training: "0.001",
  transform: "translate(690 30) scale(0.4273 0.3333)",
  testPath: "1087,604 1094,606 1103,618 1108,638 1114,659 1122,666 1160,661 1185,665 1198,679 1206,705 1213,736 1228,748 1260,752 1320,753 1404,755",
  trainingPath: "1087,604 1094,608 1102,620 1107,637 1115,672 1123,697 1140,704 1180,707 1196,712 1206,727 1215,744 1235,751 1300,754 1404,756",
};

const lossB: Loss = {
  test: "0.587",
  training: "0.320",
  transform: "translate(705.4 37.8) scale(0.4256 0.337)",
  testPath: "1053,622 1058,627 1085,626 1100,605 1115,592 1133,588 1145,576 1152,578 1160,572 1170,575 1215,575 1250,579 1300,584 1335,586 1372,585",
  trainingPath: "1053,624 1068,632 1078,640 1090,665 1100,678 1115,687 1135,688 1153,697 1162,695 1175,702 1200,710 1260,718 1320,723 1372,724",
};

export default function App() {
  return (
    <main className="relative h-[1205px] w-[2667px] overflow-hidden bg-white">
      <div className="absolute top-[40px] left-[45px] h-[696px] w-[1304px] overflow-hidden">
        <Playground epoch="000,273" regRate="0" dataset="circle" net={netA} loss={lossA} plot="circle" />
      </div>

      <div className="absolute top-[299px] left-[1572.5px] font-['Palatino','Palatino_Linotype','Liberation_Serif',serif] text-[52px] leading-[58px] whitespace-nowrap text-black">
        <p className="tracking-[1.5px]">Vary learning rate</p>
        <p className="tracking-[1.7px]">Vary MLP width, depth</p>
        <p className="mt-[3px] tracking-[0.9px]">Vary Batchsize</p>
      </div>

      <div className="absolute top-[616px] left-[1295px] h-[555.5px] w-[1282px] overflow-hidden bg-[#f7f7f7]">
        <div className="-mt-[3.8px] -ml-[8.1px] w-[1305px] origin-top-left scale-[0.989]">
          <Playground epoch="000,405" regRate="0.001" dataset="spiral" net={netB} loss={lossB} plot="spiral" />
        </div>
      </div>
    </main>
  );
}
